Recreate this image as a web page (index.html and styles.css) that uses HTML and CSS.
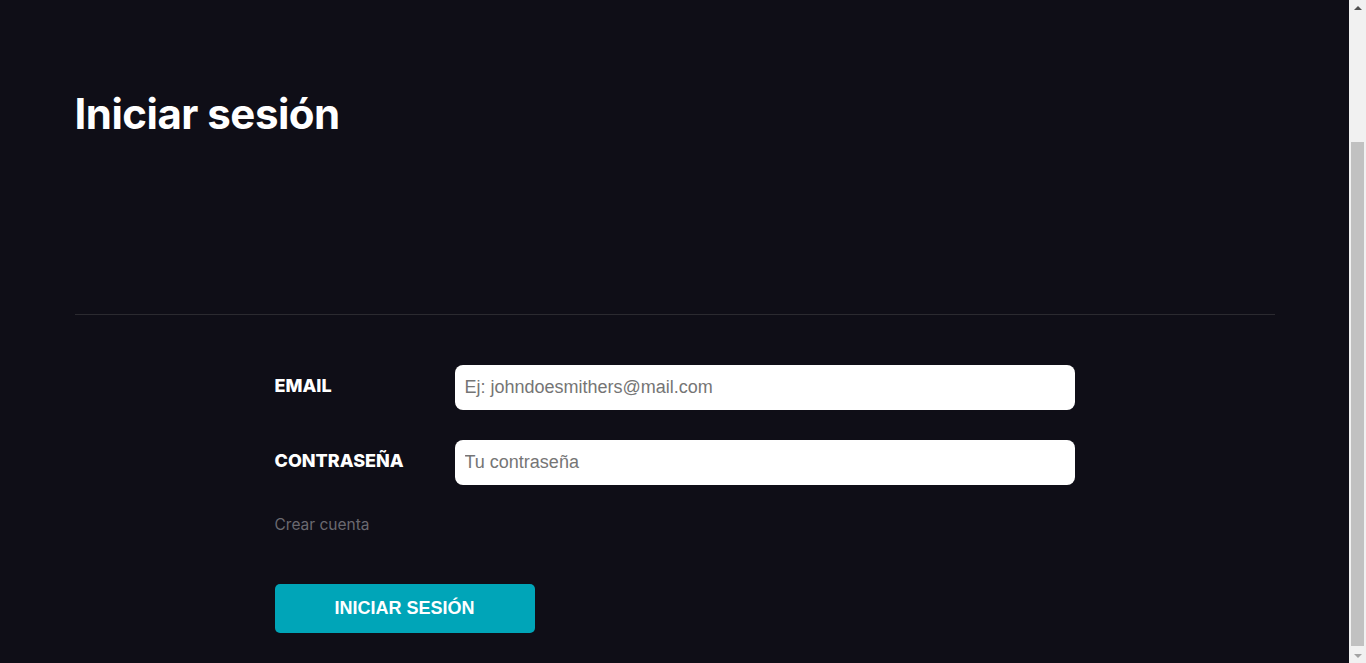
FILE: index.html
```html
<!DOCTYPE html>
<html lang="es">
<head>
<meta charset="utf-8">
<title>Iniciar sesión</title>
<link rel="stylesheet" href="styles.css">
</head>
<body>
<div class="viewport">
  <main class="container">
    <h1 class="title">Iniciar sesión</h1>
    <hr class="divider">
    <form class="login-form">
      <div class="fields">
        <label class="field-label" for="email">EMAIL</label>
        <input class="field-input" id="email" type="email" placeholder="Ej: johndoesmithers@mail.com">
        <label class="field-label" for="pass">CONTRASEÑA</label>
        <input class="field-input" id="pass" type="password" placeholder="Tu contraseña">
      </div>
      <a class="create-link" href="#">Crear cuenta</a>
      <button class="submit-btn" type="button">INICIAR SESIÓN</button>
    </form>
  </main>
</div>
<div class="scrollbar" aria-hidden="true">
  <div class="sb-arrow sb-up"><span class="tri-up"></span></div>
  <div class="sb-track"><div class="sb-thumb"></div></div>
  <div class="sb-arrow sb-down"><span class="tri-down"></span></div>
</div>
</body>
</html>
```
FILE: styles.css
```css
html, body {
  margin: 0;
  padding: 0;
  background: #0f0e17;
}
body {
  font-family: Inter, "Noto Sans", sans-serif;
  color: #ffffff;
}
.viewport {
  width: 1349px;
  min-height: 663px;
}
.container {
  width: 1200px;
  margin: 0 auto;
}
.title {
  margin: 0;
  padding-top: 88px;
  font-family: Inter, sans-serif;
  font-weight: 700;
  font-size: 42px;
  line-height: 51px;
  letter-spacing: -0.5px;
}
.divider {
  margin: 175px 0 0 0;
  border: 0;
  border-top: 1px solid #2b2a30;
  height: 0;
}
.login-form {
  width: 800px;
  margin: 50px auto 0;
  display: flex;
  flex-direction: column;
  align-items: flex-start;
}
.fields {
  display: grid;
  grid-template-columns: 180px 620px;
  row-gap: 30px;
  align-items: center;
}
.field-label {
  font-family: Inter, sans-serif;
  font-weight: 800;
  font-size: 18px;
  line-height: 22px;
  color: #ffffff;
  margin-top: -4px;
}
.field-input {
  box-sizing: border-box;
  width: 620px;
  height: 45px;
  border: 0;
  border-radius: 8px;
  padding: 0 10px;
  font-family: "Liberation Sans", Arial, sans-serif;
  font-size: 18px;
  color: #333;
  background: #fff;
  outline: none;
}
.field-input::placeholder {
  color: #757575;
}
.create-link {
  margin-top: 30px;
  font-family: Inter, sans-serif;
  font-size: 15.5px;
  line-height: 20px;
  color: #6a6970;
  text-decoration: none;
}
.submit-btn {
  margin-top: 49px;
  width: 260px;
  height: 49px;
  border: 0;
  border-radius: 5px;
  background: #00a5b8;
  color: #fff;
  font-family: "Liberation Sans", Arial, sans-serif;
  font-weight: 700;
  font-size: 18px;
  cursor: pointer;
}

/* simulated browser scrollbar */
.scrollbar {
  position: fixed;
  top: 0;
  right: 0;
  width: 17px;
  height: 663px;
  background: #f1f1f1;
  display: flex;
  flex-direction: column;
}
.sb-arrow {
  height: 17px;
  display: flex;
  align-items: center;
  justify-content: center;
}
.tri-up {
  width: 0;
  height: 0;
  border-left: 4px solid transparent;
  border-right: 4px solid transparent;
  border-bottom: 4px solid #505050;
  margin-top: -1px;
}
.tri-down {
  width: 0;
  height: 0;
  border-left: 4px solid transparent;
  border-right: 4px solid transparent;
  border-top: 4px solid #a3a3a3;
  margin-top: 2px;
}
.sb-track {
  flex: 1;
  display: flex;
  flex-direction: column;
  justify-content: flex-end;
  padding: 0 2px;
}
.sb-thumb {
  height: 504px;
  background: #c1c1c1;
}
```
